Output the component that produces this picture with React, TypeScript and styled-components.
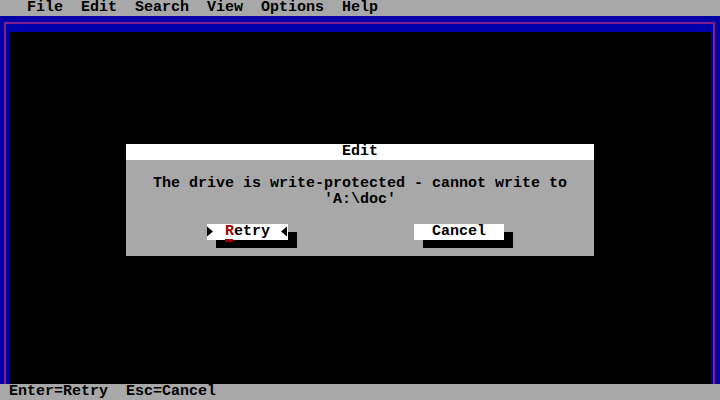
import React from "react";
import styled, { createGlobalStyle } from "styled-components";

const GRAY = "#a8a8a8";
const BLUE = "#0000a8";
const LINE = "#80208c";

const Global = createGlobalStyle`
  html, body { margin: 0; padding: 0; background: #000; }
  body { width: 720px; height: 400px; overflow: hidden; }
  * { box-sizing: border-box; }
`;

const Screen = styled.div`
  width: 720px;
  height: 400px;
  display: flex;
  flex-direction: column;
  background: #000;
  font-family: "Liberation Mono", "DejaVu Sans Mono", monospace;
  font-size: 15px;
  font-weight: bold;
  line-height: 16px;
  white-space: pre;
  color: #000;
`;

const MenuBar = styled.div`
  height: 16px;
  flex: none;
  background: ${GRAY};
  display: flex;
  gap: 18px;
  padding-left: 27px;
`;

const MenuItem = styled.span``;

const EditorFrame = styled.div`
  flex: 1;
  background: ${BLUE};
  padding: 6px 5px 0 4px;
  display: flex;
  position: relative;
`;

const FrameRule = styled.div`
  flex: 1;
  display: flex;
  border-top: 2px solid ${LINE};
  border-left: 2px solid ${LINE};
  border-right: 2px solid ${LINE};
  padding: 8px 2px 0 3px;
`;

const EditArea = styled.div`
  flex: 1;
  background: #000;
`;

const Dialog = styled.div`
  position: absolute;
  left: 126px;
  top: 128px;
  width: 468px;
  height: 112px;
  background: ${GRAY};
  display: flex;
  flex-direction: column;
`;

const TitleBar = styled.div`
  height: 16px;
  background: #fff;
  text-align: center;
`;

const Message = styled.div`
  margin-top: 16px;
  text-align: center;
`;

const MessageLine = styled.div`
  height: 16px;
`;

const ButtonRow = styled.div`
  margin-top: 16px;
  display: flex;
  gap: 126px;
  padding-left: 81px;
`;

const Button = styled.div<{ $w: number }>`
  width: ${(p) => p.$w}px;
  height: 16px;
  background: #fff;
  box-shadow: 9px 8px 0 #000;
  display: flex;
  align-items: center;
`;

const Cell = styled.span`
  width: 9px;
  height: 16px;
  display: inline-flex;
  align-items: center;
  justify-content: center;
  flex: none;
`;

const HotKey = styled.span`
  position: relative;
  color: #a80000;
  width: 9px;
  display: inline-block;
  &::after {
    content: "";
    position: absolute;
    left: 0;
    right: 1px;
    bottom: -2px;
    height: 3px;
    background: #a80000;
  }
`;

const Label = styled.span`
  display: inline-flex;
  height: 16px;
`;

const StatusBar = styled.div`
  height: 16px;
  flex: none;
  background: ${GRAY};
  padding-left: 9px;
`;

const Tri = ({ dir }: { dir: "right" | "left" }) => (
  <Cell>
    <svg width="9" height="16" viewBox="0 0 9 16">
      {dir === "right" ? (
        <polygon points="0,2.5 0,12.5 6,7.5" fill="#000" />
      ) : (
        <polygon points="8,2.5 8,12.5 2,7.5" fill="#000" />
      )}
    </svg>
  </Cell>
);

export default function App() {
  return (
    <>
      <Global />
      <Screen>
        <MenuBar>
          {["File", "Edit", "Search", "View", "Options", "Help"].map((m) => (
            <MenuItem key={m}>{m}</MenuItem>
          ))}
        </MenuBar>
        <EditorFrame>
          <FrameRule>
            <EditArea />
          </FrameRule>
          <Dialog>
            <TitleBar>Edit</TitleBar>
            <Message>
              <MessageLine>The drive is write-protected - cannot write to</MessageLine>
              <MessageLine>'A:\doc'</MessageLine>
            </Message>
            <ButtonRow>
              <Button $w={81}>
                <Tri dir="right" />
                <Cell> </Cell>
                <Label>
                  <HotKey>R</HotKey>etry
                </Label>
                <Cell> </Cell>
                <Tri dir="left" />
              </Button>
              <Button $w={90}>
                <Label>  Cancel  </Label>
              </Button>
            </ButtonRow>
          </Dialog>
        </EditorFrame>
        <StatusBar>Enter=Retry  Esc=Cancel</StatusBar>
      </Screen>
    </>
  );
}
